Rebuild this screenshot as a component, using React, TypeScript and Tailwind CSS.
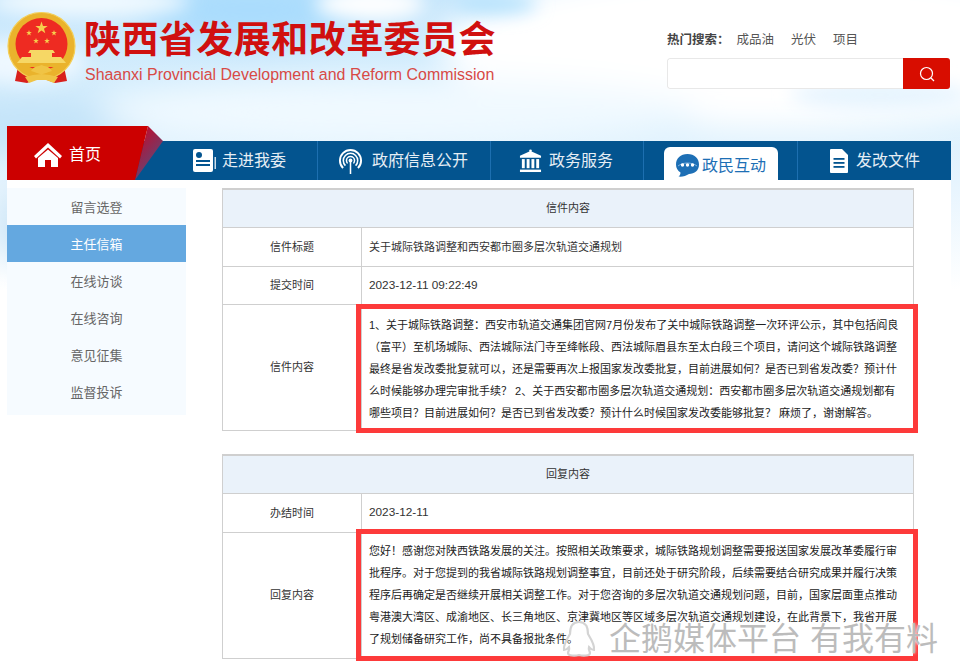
const font = { fontFamily: '"Liberation Sans","Noto Sans CJK SC",sans-serif' };

function Clouds() {
  return (
    <svg className="absolute left-0 top-0" width="960" height="290" viewBox="0 0 960 290">
      <defs>
        <filter id="blur1" x="-30%" y="-50%" width="160%" height="200%"><feGaussianBlur stdDeviation="16" /></filter>
        <filter id="blur2" x="-30%" y="-50%" width="160%" height="200%"><feGaussianBlur stdDeviation="9" /></filter>
        <linearGradient id="sky" x1="0" y1="0" x2="0" y2="1">
          <stop offset="0" stopColor="#c6e6fc" />
          <stop offset="0.35" stopColor="#d8effd" />
          <stop offset="0.62" stopColor="#e6f4fe" />
          <stop offset="1" stopColor="#ffffff" />
        </linearGradient>
      </defs>
      <rect width="960" height="290" fill="url(#sky)" />
      <g filter="url(#blur1)">
        <ellipse cx="250" cy="10" rx="110" ry="30" fill="#a9dcfd" />
        <ellipse cx="30" cy="125" rx="120" ry="30" fill="#c4e4f9" />
        <ellipse cx="780" cy="45" rx="340" ry="85" fill="#ffffff" />
        <ellipse cx="400" cy="112" rx="300" ry="34" fill="#f0f9ff" />
        <ellipse cx="20" cy="225" rx="28" ry="36" fill="#cde6f7" />
      </g>
      <g filter="url(#blur2)">
        <ellipse cx="90" cy="2" rx="100" ry="14" fill="#f2faff" />
        <ellipse cx="370" cy="4" rx="55" ry="16" fill="#ffffff" />
        <ellipse cx="495" cy="4" rx="42" ry="10" fill="#b2e1fd" />
        <ellipse cx="25" cy="62" rx="60" ry="22" fill="#eef8ff" />
        <ellipse cx="880" cy="95" rx="90" ry="14" fill="#e6f4fe" />
      </g>
    </svg>
  );
}

function Emblem() {
  const star = (cx: number, cy: number, r: number) => {
    const p: string[] = [];
    for (let i = 0; i < 10; i++) {
      const a = -Math.PI / 2 + (i * Math.PI) / 5;
      const rr = i % 2 ? r * 0.4 : r;
      p.push(`${cx + rr * Math.cos(a)},${cy + rr * Math.sin(a)}`);
    }
    return <polygon points={p.join(" ")} fill="#f6cf4d" />;
  };
  return (
    <svg width="70" height="76" viewBox="7 10 70 76">
      <path d="M19 62 L15 81 L27 83 L35 80 L47 80 L55 83 L67 81 L63 62 Z" fill="#d8201c" />
      <circle cx="41.5" cy="46" r="33.5" fill="#eab32c" />
      <circle cx="41.5" cy="46" r="33.5" fill="none" stroke="#f4cf58" strokeWidth="1.2" />
      <circle cx="41.5" cy="44" r="26" fill="#ee2b22" />
      {star(41.5, 28, 6.5)}
      {star(29, 33, 3)}
      {star(54, 33, 3)}
      {star(36, 41, 3)}
      {star(47, 41, 3)}
      <path d="M30 50 H53 L55 53 H52 V57 H31 V53 H28 Z" fill="#f6d765" />
      <path d="M22 57 H61 L66 63 H17 Z" fill="#f6d765" />
      <path d="M20 63 H63 L60 67 H23 Z" fill="#eab32c" />
      <path d="M31 71 C35 65 38 67 41.5 65 C45 67 48 65 52 71 C47 72 45 74 41.5 74 C38 74 36 72 31 71 Z" fill="#f0c445" />
      <path d="M25 77 L33 75 C37 75 39 74 41.5 74 C44 74 46 75 50 75 L58 77 L54 83 L46 80 L37 80 L29 83 Z" fill="#f0c445" />
    </svg>
  );
}

function NavIcon({ kind, color = "white" }: { kind: string; color?: string }) {
  if (kind === "book")
    return (
      <svg width="23" height="24" viewBox="0 0 23 24">
        <rect x="0" y="0" width="20" height="23" rx="2" fill={color} />
        <circle cx="6" cy="6" r="3" fill="#03548f" />
        <rect x="3" y="11" width="14" height="2" fill="#03548f" />
        <rect x="3" y="15" width="14" height="2" fill="#03548f" />
        <rect x="21.6" y="8" width="1.2" height="12" fill={color} />
      </svg>
    );
  if (kind === "signal")
    return (
      <svg width="25" height="25" viewBox="0 0 26 26" fill="none" stroke={color}>
        <circle cx="13" cy="12" r="11" strokeWidth="2" />
        <circle cx="13" cy="12" r="7.5" strokeWidth="1.6" />
        <circle cx="13" cy="12" r="4.2" strokeWidth="1.6" />
        <path d="M5 20 L13 12 L21 20 L21 26 L5 26 Z" fill="#03548f" stroke="none" />
        <circle cx="13" cy="12" r="2" fill={color} stroke="none" />
        <path d="M13 13 V26" strokeWidth="1.6" />
      </svg>
    );
  if (kind === "bank")
    return (
      <svg width="23" height="24" viewBox="0 0 24 24" fill={color}>
        <circle cx="12" cy="1.4" r="1.4" />
        <path d="M12 1.5 L23 6.5 V8.5 H1 V6.5 Z" />
        <rect x="3" y="10" width="3" height="9.5" />
        <rect x="8" y="10" width="3" height="9.5" />
        <rect x="13" y="10" width="3" height="9.5" />
        <rect x="18" y="10" width="3" height="9.5" />
        <rect x="1" y="21" width="22" height="2.5" />
      </svg>
    );
  return (
    <svg width="18" height="24" viewBox="0 0 18 24">
      <path d="M0 1 a1 1 0 0 1 1 -1 H12 L18 6 V23 a1 1 0 0 1 -1 1 H1 a1 1 0 0 1 -1 -1 Z" fill={color} />
      <rect x="3.5" y="9" width="11" height="1.8" fill="#03548f" />
      <rect x="3.5" y="13" width="11" height="1.8" fill="#03548f" />
      <rect x="3.5" y="17" width="11" height="1.8" fill="#03548f" />
    </svg>
  );
}

function Bubble() {
  return (
    <svg width="25" height="25" viewBox="0 0 25 25">
      <path d="M12.5 1 C19.5 1 24 5.5 24 11.5 C24 17.5 19.5 21 14 21 C11 23 7 24 3.5 23.5 C5 22.5 5.5 21 5.5 19.5 C2.5 17.5 1 15 1 11.5 C1 5.5 5.5 1 12.5 1 Z" fill="#1d6fb5" />
      <path d="M3 13 C8 9 17 9 22 13" stroke="#7fb2de" strokeWidth="1" fill="none" />
      <circle cx="7.5" cy="12" r="1.7" fill="white" />
      <circle cx="12.5" cy="12" r="1.7" fill="white" />
      <circle cx="17.5" cy="12" r="1.7" fill="white" />
    </svg>
  );
}

const sideItems = ["留言选登", "主任信箱", "在线访谈", "在线咨询", "意见征集", "监督投诉"];

const navItems = [
  { w: "w-[154px]", pl: "pl-[29px] gap-[6px]", icon: "book", t: "走进我委" },
  { w: "w-[173px]", pl: "pl-[20px] gap-[9px]", icon: "signal", t: "政府信息公开" },
  { w: "w-[153px]", pl: "pl-[28px] gap-[7px]", icon: "bank", t: "政务服务" },
];

function Cell({ label, h, children, highlight }: { label: string; h: string; children: React.ReactNode; highlight?: boolean }) {
  return (
    <div className={`flex ${h} border-t border-[#cfcfcf]`}>
      <div className="w-[139px] shrink-0 flex items-center justify-center text-[11px] text-[#333] border-r border-[#cfcfcf]">{label}</div>
      <div className={`flex-1 flex items-center pl-[7px] text-[11px] text-[#333] ${highlight ? "relative" : ""}`}>{children}</div>
    </div>
  );
}

function Paragraph({ lines, box }: { lines: string[]; box: string }) {
  return (
    <div className={`absolute left-[-6px] w-[562px] border-[5px] border-[#fd3a3a] flex flex-col justify-center pl-[8px] ${box}`}>
      {lines.map((l) => (
        <div key={l} className="text-[11px] leading-[22px] text-[#222] whitespace-nowrap">{l}</div>
      ))}
    </div>
  );
}

export default function App() {
  return (
    <div style={font} className="relative w-[960px] h-[671px] overflow-hidden bg-white">
      <Clouds />
      <div className="relative h-[180px] flex flex-col">
        <div className="flex items-start pl-[7px] pt-[10px]">
          <Emblem />
          <div className="ml-[7px] mt-[5px]">
            <div className="text-[37px] leading-[52px] font-bold text-[#d0100f] whitespace-nowrap tracking-[0.45px]">陕西省发展和改革委员会</div>
            <div className="text-[15.95px] leading-[18px] text-[#d84a46] whitespace-nowrap -mt-[1px] pl-[1px]">Shaanxi Provincial Development and Reform Commission</div>
          </div>
          <div className="ml-auto mr-[10px] mt-[20px] w-[283px]">
            <div className="flex items-center text-[12.5px] text-[#555] leading-[20px]">
              <span className="font-bold text-[#444]">热门搜索：</span>
              <span className="ml-[7px]">成品油</span>
              <span className="ml-[17px]">光伏</span>
              <span className="ml-[17px]">项目</span>
            </div>
            <div className="mt-[8px] flex h-[31px] rounded-[3px] overflow-hidden bg-white">
              <div className="flex-1 border border-r-0 border-[#e8e8e8] rounded-l-[3px]" />
              <div className="w-[47px] bg-[#d80d00] flex items-center justify-center">
                <svg width="16" height="16" viewBox="0 0 16 16" fill="none" stroke="white" strokeWidth="1.2">
                  <circle cx="7.5" cy="7.5" r="6" />
                  <path d="M12 12 L15 15" />
                </svg>
              </div>
            </div>
          </div>
        </div>

        <div className="mt-auto ml-[7px] mr-[9px] h-[54px] flex items-end">
          <div className="relative w-[157px] h-[54px] shrink-0">
            <div className="absolute right-0 bottom-0 w-[40px] h-[39px] bg-[#03548f]" />
            <div className="absolute inset-0 bg-[linear-gradient(130deg,#b81233_70%,#3c5c94_100%)] [clip-path:polygon(141px_0,156px_15px,128px_54px)]" />
            <div className="absolute inset-0 bg-[#cc0000] [clip-path:polygon(0_0,141px_0,128px_54px,0_54px)]" />
            <div className="relative flex items-center h-full pl-[27px] pt-[3px] text-white text-[16px]">
              <svg width="28" height="24" viewBox="0 0 28 24" fill="white">
                <path d="M14 0 L28 13 L26 15.5 L14 4.5 L2 15.5 L0 13 Z" />
                <path d="M4 15 L14 6.5 L24 15 V24 H17 V17 H11 V24 H4 Z" />
              </svg>
              <span className="ml-[7px]">首页</span>
            </div>
          </div>
          <div className="flex-1 h-[39px] bg-[#03548f] flex text-white text-[16px]">
            {navItems.map((n) => (
              <div key={n.t} className={`${n.w} ${n.pl} pt-[1px] flex items-center border-r border-[#1d6fb0] shrink-0`}>
                <NavIcon kind={n.icon} />
                <span className="text-[#e6eef5]">{n.t}</span>
              </div>
            ))}
            <div className="w-[154px] shrink-0 border-r border-[#1d6fb0] flex items-end justify-center">
              <div className="w-[114px] h-[33px] pt-[4px] bg-white rounded-t-[6px] flex items-center justify-center gap-[2px] text-[#1d6fb5]">
                <Bubble />
                <span>政民互动</span>
              </div>
            </div>
            <div className="flex-1 flex items-center pl-[32px] pt-[1px] gap-[8px]">
              <NavIcon kind="doc" />
              <span className="text-[#e6eef5]">发改文件</span>
            </div>
          </div>
        </div>
      </div>

      <div className="relative h-[491px] ml-[7px] mr-[9px] bg-white flex items-start pt-[8px]">
        <div className="w-[179px] shrink-0 bg-[#f6fbff] pb-[5px]">
          {sideItems.map((s, i) => (
            <div key={s} className={`h-[37px] pt-[3px] flex items-center justify-center text-[13px] ${i === 1 ? "bg-[#64a8e0] text-white" : "text-[#666]"}`}>{s}</div>
          ))}
        </div>
        <div className="ml-[36px] w-[692px] shrink-0">
          <div className="border border-t-2 border-[#cfcfcf]">
            <div className="h-[37px] bg-[#eaf2fa] flex items-center justify-center text-[11px] text-[#333]">信件内容</div>
            <Cell label="信件标题" h="h-[39px]">关于城际铁路调整和西安都市圈多层次轨道交通规划</Cell>
            <Cell label="提交时间" h="h-[38px]"><span className="text-[11.8px]">2023-12-11 09:22:49</span></Cell>
            <Cell label="信件内容" h="h-[126px]" highlight>
              <Paragraph box="top-[-1px] h-[129px]" lines={[
                "1、关于城际铁路调整：西安市轨道交通集团官网7月份发布了关中城际铁路调整一次环评公示，其中包括阎良",
                "（富平）至机场城际、西法城际法门寺至绛帐段、西法城际眉县东至太白段三个项目，请问这个城际铁路调整",
                "最终是省发改委批复就可以，还是需要再次上报国家发改委批复，目前进展如何？是否已到省发改委？预计什",
                "么时候能够办理完审批手续？ 2、关于西安都市圈多层次轨道交通规划：西安都市圈多层次轨道交通规划都有",
                "哪些项目？目前进展如何？是否已到省发改委？预计什么时候国家发改委能够批复？ 麻烦了，谢谢解答。",
              ]} />
            </Cell>
          </div>
          <div className="mt-[23px] border border-t-2 border-[#cfcfcf]">
            <div className="h-[37px] bg-[#eaf2fa] flex items-center justify-center text-[11px] text-[#333]">回复内容</div>
            <Cell label="办结时间" h="h-[39px]"><span className="text-[11.8px]">2023-12-11</span></Cell>
            <Cell label="回复内容" h="h-[126px]" highlight>
              <Paragraph box="top-[-4px] h-[132px]" lines={[
                "您好！感谢您对陕西铁路发展的关注。按照相关政策要求，城际铁路规划调整需要报送国家发展改革委履行审",
                "批程序。对于您提到的我省城际铁路规划调整事宜，目前还处于研究阶段，后续需要结合研究成果并履行决策",
                "程序后再确定是否继续开展相关调整工作。对于您咨询的多层次轨道交通规划问题，目前，国家层面重点推动",
                "粤港澳大湾区、成渝地区、长三角地区、京津冀地区等区域多层次轨道交通规划建设，在此背景下，我省开展",
                "了规划储备研究工作，尚不具备报批条件。",
              ]} />
            </Cell>
          </div>
        </div>
      </div>

      <div className="absolute left-[560px] top-[620px] flex items-center text-[32px] leading-[36px] text-[#bcbcbc] whitespace-nowrap [text-shadow:0_0_3px_#ffffff]">
        <svg width="38" height="38" viewBox="0 0 38 38" fill="none" stroke="#d4d4d4" strokeWidth="2.2" className="mr-[11px]">
          <path d="M19 2 C11 2 10 9 10 14 C7 19 3 25 4 30 C7 30 8 28 9 27 C10 30 8 31 8 33 C8 36 15 36 19 35 C23 36 30 36 30 33 C30 31 28 30 29 27 C30 28 31 30 34 30 C35 25 31 19 28 14 C28 9 27 2 19 2 Z" />
        </svg>
        <span>企鹅媒体平台 有我有料</span>
      </div>
    </div>
  );
}
